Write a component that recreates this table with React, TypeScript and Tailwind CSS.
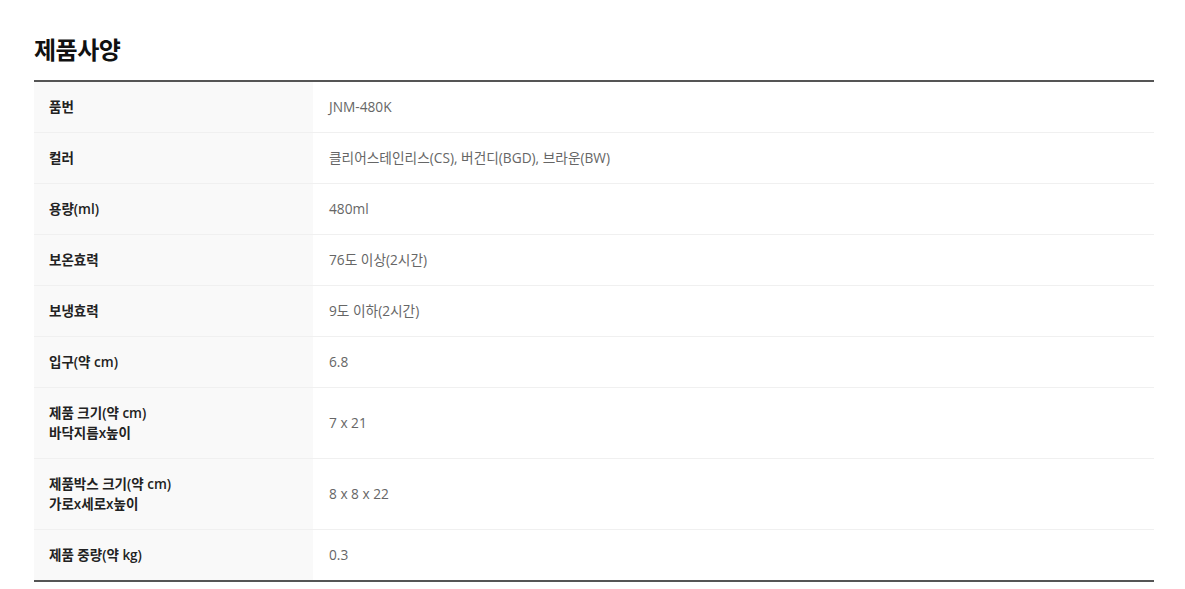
const rows: { label: string[]; value: string }[] = [
  { label: ["품번"], value: "JNM-480K" },
  { label: ["컬러"], value: "클리어스테인리스(CS), 버건디(BGD), 브라운(BW)" },
  { label: ["용량(ml)"], value: "480ml" },
  { label: ["보온효력"], value: "76도 이상(2시간)" },
  { label: ["보냉효력"], value: "9도 이하(2시간)" },
  { label: ["입구(약 cm)"], value: "6.8" },
  { label: ["제품 크기(약 cm)", "바닥지름x높이"], value: "7 x 21" },
  { label: ["제품박스 크기(약 cm)", "가로x세로x높이"], value: "8 x 8 x 22" },
  { label: ["제품 중량(약 kg)"], value: "0.3" },
];

export default function App() {
  return (
    <div
      className="bg-white pl-[34px] pr-[31px] pt-[35px] w-[1185px] h-[589px]"
      style={{ fontFamily: '"Open Sans", "Noto Sans CJK KR", sans-serif' }}
    >
      <h2 className="text-[24px] leading-[30px] font-bold text-[#111] tracking-[-0.5px]">제품사양</h2>
      <div className="mt-[15px] border-t-2 border-b-2 border-[#555]">
        {rows.map((r, i) => (
          <div
            key={i}
            className={`flex ${i < rows.length - 1 ? "border-b border-[#f0f0f0]" : ""}`}
          >
            <div className="w-[279px] shrink-0 bg-[#f9f9f9] px-[15px] py-[15px] text-[13.5px] leading-[20px] font-semibold text-[#222] flex flex-col justify-center">
              {r.label.map((l, j) => (
                <span key={j}>{l}</span>
              ))}
            </div>
            <div className="flex-1 px-[16px] py-[15px] text-[13.7px] leading-[20px] text-[#666] flex items-center">
              {r.value}
            </div>
          </div>
        ))}
      </div>
    </div>
  );
}
